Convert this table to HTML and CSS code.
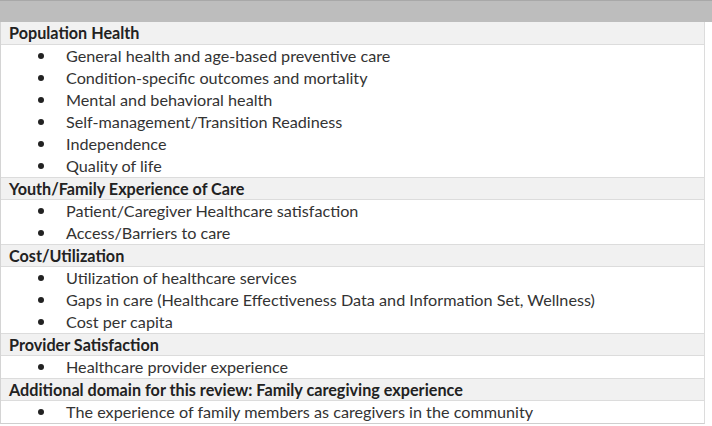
FILE: index.html
```html
<!DOCTYPE html>
<html>
<head>
<meta charset="utf-8">
<link rel="stylesheet" href="styles.css">
</head>
<body>
<div class="table">
  <div class="top"></div>
  <div class="body">
    <div class="sec">Population Health</div>
    <div class="item"><span class="dot"></span>General health and age-based preventive care</div>
    <div class="item"><span class="dot"></span>Condition-specific outcomes and mortality</div>
    <div class="item"><span class="dot"></span>Mental and behavioral health</div>
    <div class="item"><span class="dot"></span>Self-management/Transition Readiness</div>
    <div class="item"><span class="dot"></span>Independence</div>
    <div class="item"><span class="dot"></span>Quality of life</div>
    <div class="sec">Youth/Family Experience of Care</div>
    <div class="item"><span class="dot"></span>Patient/Caregiver Healthcare satisfaction</div>
    <div class="item"><span class="dot"></span>Access/Barriers to care</div>
    <div class="sec">Cost/Utilization</div>
    <div class="item"><span class="dot"></span>Utilization of healthcare services</div>
    <div class="item"><span class="dot"></span>Gaps in care (Healthcare Effectiveness Data and Information Set, Wellness)</div>
    <div class="item"><span class="dot"></span>Cost per capita</div>
    <div class="sec">Provider Satisfaction</div>
    <div class="item"><span class="dot"></span>Healthcare provider experience</div>
    <div class="sec">Additional domain for this review: Family caregiving experience</div>
    <div class="item"><span class="dot"></span>The experience of family members as caregivers in the community</div>
  </div>
</div>
</body>
</html>
```
FILE: styles.css
```css
html, body {
  margin: 0;
  padding: 0;
  background: #ffffff;
}
.table {
  width: 712px;
  height: 426px;
  display: flex;
  flex-direction: column;
  font-family: Lato, "Open Sans", sans-serif;
  font-size: 16.2px;
  color: #333333;
}
.top {
  height: 22px;
  background: #bdbdbd;
  border-top: 1px solid #a8a8a8;
  box-sizing: border-box;
}
.body {
  width: 705px;
  border-left: 1px solid #d4d4d4;
  border-right: 1px solid #dcdcdc;
  border-bottom: 1px solid #cfcfcf;
  box-sizing: border-box;
  display: flex;
  flex-direction: column;
}
.sec {
  height: 21px;
  line-height: 21px;
  background: #f1f1f1;
  border-top: 1px solid #dcdcdc;
  border-bottom: 1px solid #dcdcdc;
  padding-left: 8px;
  font-weight: bold;
  color: #222222;
}
.sec:first-child {
  border-top: none;
  height: 22px;
  line-height: 22px;
}
.item {
  height: 22px;
  line-height: 22px;
  display: flex;
  align-items: center;
  padding-left: 37px;
}
.dot {
  width: 6px;
  height: 6px;
  border-radius: 50%;
  background: #222222;
  margin-right: 22px;
  flex: none;
}
```
